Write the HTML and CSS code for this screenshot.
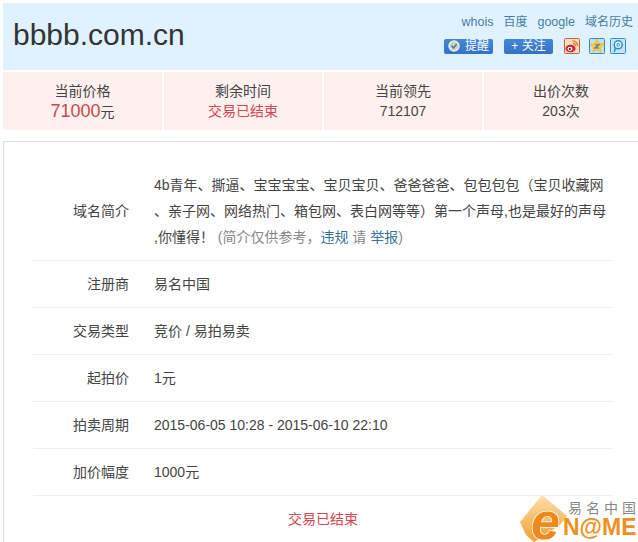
FILE: index.html
```html
<!DOCTYPE html>
<html>
<head>
  <meta charset="UTF-8">
  <title>bbbb.com.cn</title>
  <link rel="stylesheet" href="styles.css">
</head>
<body>
  <div class="header">
    <h1 class="domain">bbbb.com.cn</h1>
    <div class="tools">
      <div class="links">
        <a class="en" href="#">whois</a>
        <a href="#">百度</a>
        <a class="en" href="#">google</a>
        <a href="#">域名历史</a>
      </div>
      <div class="actions">
        <a class="btn" href="#">
          <svg width="12" height="12" viewBox="0 0 12 12"><circle cx="6" cy="6" r="5" fill="#c9d6b8" stroke="#e6edf2" stroke-width="1.500"/><path d="M3.500 5.800l2 2 3.200-3.600" fill="none" stroke="#4f78a8" stroke-width="1.500"/></svg>
          提醒
        </a>
        <a class="btn" href="#">+ 关注</a>
        <span class="shares">
          <svg width="16" height="16" viewBox="0 0 16 16"><rect x=".5" y=".5" width="15" height="15" rx="1" fill="#f8dcc4" stroke="#c4603c"/><ellipse cx="6.500" cy="10.500" rx="5" ry="3.800" fill="#d4232a"/><ellipse cx="6" cy="10.800" rx="2.500" ry="2.100" fill="#fff"/><circle cx="5.800" cy="11" r="1.100" fill="#222"/><path d="M8.500 3a4.500 4.500 0 0 1 5 5M9 5.500a2 2 0 0 1 2.300 2.300" fill="none" stroke="#e8771c" stroke-width="1.300"/></svg>
          <svg class="star" width="16" height="16" viewBox="0 0 16 16"><rect x=".5" y=".5" width="15" height="15" rx="1" fill="#bfe2f5" stroke="#3a86c8"/><path d="M8 .8l2.200 4.500 5 .7-3.600 3.400.9 5L8 12l-4.500 2.400.9-5L.8 6l5-.7z" fill="#f9cb30" stroke="#e8a818" stroke-width=".4"/><path d="M6 6.800h4l-4 3.200h4.100" fill="none" stroke="#3f7cbc" stroke-width="1.100"/></svg>
          <svg width="16" height="16" viewBox="0 0 16 16"><rect x=".5" y=".5" width="15" height="15" rx="1" fill="#c6e6f4" stroke="#2a90c8"/><circle cx="8.200" cy="6.800" r="4" fill="#e8f6fb" stroke="#2a90c8" stroke-width="1.500"/><circle cx="8.200" cy="6.800" r="1.400" fill="none" stroke="#2a90c8"/><path d="M5.500 9.500L4.300 14" stroke="#2a90c8" stroke-width="1.500"/></svg>
        </span>
      </div>
    </div>
  </div>

  <div class="stats">
    <div class="stat"><div>当前价格</div><div><b class="price">71000</b>元</div></div>
    <div class="stat"><div>剩余时间</div><div class="ended">交易已结束</div></div>
    <div class="stat"><div>当前领先</div><div>712107</div></div>
    <div class="stat"><div>出价次数</div><div>203次</div></div>
  </div>

  <div class="card">
    <div class="row row-desc">
      <div class="label">域名简介</div>
      <div class="value">4b青年、撕逼、宝宝宝宝、宝贝宝贝、爸爸爸爸、包包包包（宝贝收藏网<br>、亲子网、网络热门、箱包网、表白网等等）第一个声母,也是最好的声母<br>,你懂得！ <span class="note">(简介仅供参考，<a href="#">违规</a> 请 <a href="#">举报</a>)</span></div>
    </div>
    <div class="row"><div class="label">注册商</div><div class="value">易名中国</div></div>
    <div class="row"><div class="label">交易类型</div><div class="value">竞价 / 易拍易卖</div></div>
    <div class="row"><div class="label">起拍价</div><div class="value">1元</div></div>
    <div class="row"><div class="label">拍卖周期</div><div class="value">2015-06-05 10:28 - 2015-06-10 22:10</div></div>
    <div class="row"><div class="label">加价幅度</div><div class="value">1000元</div></div>
    <div class="status">交易已结束</div>
  </div>

  <div class="watermark">
    <svg width="118" height="47" viewBox="0 0 118 47">
      <defs>
        <linearGradient id="logoFill" x1="0" y1="0" x2="0" y2="1">
          <stop offset="0" stop-color="#fde0ac"/>
          <stop offset="1" stop-color="#f0a030"/>
        </linearGradient>
      </defs>
      <path d="M22 0L47 21 40 30 14 47 6 40 0 27z" fill="url(#logoFill)"/>
      <text class="logo-e" x="11" y="44">e</text>
      <text class="logo-cn" x="48 66 84 102" y="18">易名中国</text>
      <text class="logo-en" x="43" y="40">N@ME</text>
    </svg>
  </div>
</body>
</html>
```

FILE: styles.css
```css
* {
  box-sizing: border-box;
}
html, body {
  height: 100%;
}
body {
  margin: 0;
  padding: 3px 0 0 3px;
  overflow: hidden;
  position: relative;
  background: #fff;
  color: #444;
  font: 14px/20px "Liberation Sans", "Noto Sans CJK SC", sans-serif;
}
a {
  color: #3b7193;
  text-decoration: none;
}
.header {
  display: flex;
  justify-content: space-between;
  height: 67px;
  padding: 0 5px 0 10px;
  background: #e0f2ff;
}
.domain {
  margin: 14px 0 0;
  color: #333;
  font-size: 30px;
  font-weight: normal;
  line-height: 36px;
}
.tools {
  padding-top: 9px;
}
.links {
  display: flex;
  justify-content: flex-end;
  gap: 10px;
  font-size: 12px;
  line-height: 20px;
}
.links a {
  color: #4a7c9e;
}
.links .en {
  font-size: 12.500px;
}
.actions {
  display: flex;
  align-items: center;
  margin: 6px 7px 0 0;
}
.btn {
  display: flex;
  align-items: center;
  justify-content: center;
  gap: 5px;
  width: 49px;
  height: 15px;
  margin-right: 11px;
  border-radius: 2px;
  background: linear-gradient(#4486d8, #3473c4);
  color: #fff;
  font-size: 12px;
  line-height: 15px;
}
.shares {
  display: flex;
  gap: 5px;
  line-height: 0;
}
.shares .star {
  margin-left: 4px;
}
.stats {
  display: grid;
  grid-template-columns: 159px 158px 158px 1fr;
  gap: 2px;
  margin-top: 2px;
}
.stat {
  height: 58px;
  padding-top: 9px;
  background: #fff0f0;
  text-align: center;
}
.price {
  color: #c94a4a;
  font-size: 18px;
  font-weight: normal;
}
.ended, .status {
  color: #d4474f;
}
.card {
  margin-top: 11px;
  padding: 0 25px 0 29px;
  height: 420px;
  border: 1px solid #ddd;
  border-right: 0;
  border-bottom: 0;
}
.row {
  display: flex;
  align-items: center;
  height: 47px;
  border-bottom: 1px solid #eee;
}
.row-desc {
  height: 119px;
  padding-top: 20px;
}
.label {
  width: 96px;
  flex: none;
  text-align: right;
}
.value {
  margin-left: 25px;
  line-height: 26px;
  white-space: nowrap;
}
.note {
  color: #888;
}
.status {
  padding-top: 13px;
  text-align: center;
}
.watermark {
  position: absolute;
  right: 0;
  bottom: 0;
  line-height: 0;
}
.logo-e {
  fill: #ee8a1c;
  stroke: #fff;
  stroke-width: 1.500px;
  paint-order: stroke;
  font: italic bold 52px "Liberation Sans", sans-serif;
}
.logo-cn {
  fill: #888;
  font: 14px "Noto Sans CJK SC", sans-serif;
}
.logo-en {
  fill: #f09020;
  font: bold 23px "Liberation Sans", sans-serif;
}
```
